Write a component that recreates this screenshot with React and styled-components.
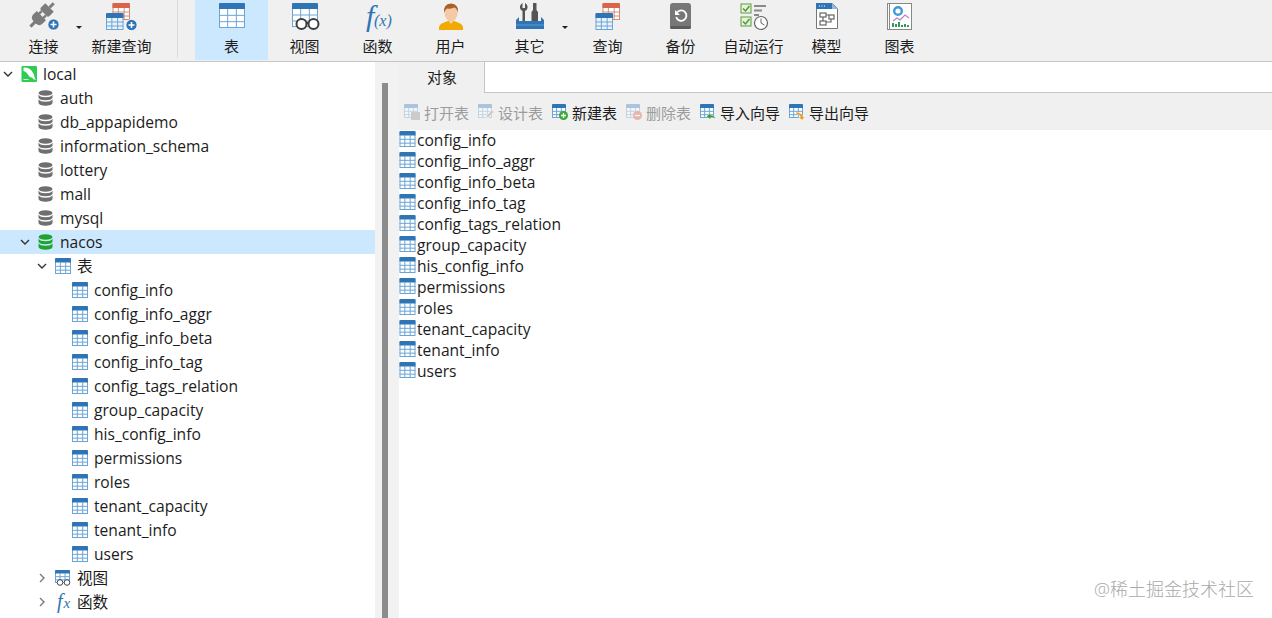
import React from "react";
import styled, { createGlobalStyle } from "styled-components";

const Global = createGlobalStyle`
  html, body { margin: 0; padding: 0; background: #fff; }
  body { font-family: "Open Sans", "Noto Sans CJK SC", sans-serif; font-size: 15px; color: #1c1c1c; }
  svg { overflow: visible; }
`;

const Page = styled.div`
  position: relative;
  width: 1272px;
  height: 618px;
  overflow: hidden;
  display: flex;
  flex-direction: column;
`;
const TopBar = styled.header`
  height: 61px;
  flex: none;
  display: flex;
  padding-left: 7px;
  background: #f0f0f0;
  border-bottom: 1px solid #c6c6c6;
`;
const TopButton = styled.div`
  width: 73px;
  height: 60px;
  flex: none;
  margin-left: ${(p) => p.$offset || 0}px;
  display: flex;
  flex-direction: column;
  align-items: center;
  padding-top: 2px;
  box-sizing: border-box;
  background: ${(p) => (p.$active ? "#cce8ff" : "transparent")};
`;
const TopLabel = styled.span`
  margin-top: 1px;
  line-height: 22px;
  font-size: 15px;
  white-space: nowrap;
`;
const Caret = styled.span`
  width: ${(p) => p.$w}px;
  flex: none;
  position: relative;
  &::after {
    content: "";
    position: absolute;
    left: -4px;
    top: 26px;
    border-left: 3px solid transparent;
    border-right: 3px solid transparent;
    border-top: 3px solid #222;
  }
`;
const Separator = styled.span`
  width: 1px;
  height: 58px;
  flex: none;
  margin: 0 17px 0 19px;
  background: #dcdcdc;
`;
const Main = styled.div`
  flex: 1;
  display: flex;
  min-height: 0;
`;
const Tree = styled.nav`
  width: 375px;
  flex: none;
  background: #fff;
`;
const Row = styled.div`
  height: 24px;
  display: flex;
  align-items: center;
  padding-left: ${(p) => p.$depth * 17}px;
  background: ${(p) => (p.$selected ? "#cce8ff" : "transparent")};
`;
const ChevronSlot = styled.span`
  width: 16px;
  height: 16px;
  flex: none;
  margin-right: 5px;
  display: flex;
  align-items: center;
  justify-content: center;
`;
const RowText = styled.span`
  margin-left: 6px;
  font-size: 15.6px;
  line-height: 24px;
  white-space: nowrap;
`;
const Gutter = styled.div`
  width: 24px;
  flex: none;
  box-sizing: border-box;
  padding: 21px 11px 0 7px;
  background: #f2f2f2;
  display: flex;
`;
const GutterBar = styled.div`
  width: 6px;
  background: #8c8c8c;
`;
const Content = styled.section`
  flex: 1;
  min-width: 0;
  display: flex;
  flex-direction: column;
`;
const TabStrip = styled.div`
  height: 31px;
  flex: none;
  display: flex;
`;
const Tab = styled.div`
  width: 86px;
  box-sizing: border-box;
  padding-left: 28px;
  line-height: 31px;
  font-size: 15px;
  background: #f0f0f0;
  border-right: 1px solid #c6c6c6;
`;
const TabFill = styled.div`
  flex: 1;
  background: #fff;
  border-bottom: 1px solid #c6c6c6;
`;
const ActionBar = styled.div`
  height: 37px;
  flex: none;
  box-sizing: border-box;
  padding: 1px 0 0 5px;
  display: flex;
  align-items: center;
  gap: 9px;
  background: #f0f0f0;
`;
const Action = styled.div`
  display: flex;
  align-items: center;
  gap: 4px;
  font-size: 15px;
  white-space: nowrap;
  color: ${(p) => (p.$disabled ? "#9c9c9c" : "#1c1c1c")};
`;
const ActionIcon = styled.span`
  display: flex;
  opacity: ${(p) => (p.$disabled ? 0.35 : 1)};
`;
const ObjectList = styled.div`
  flex: 1;
  display: flex;
  flex-direction: column;
  background: #fff;
`;
const ObjectRow = styled.div`
  height: 21px;
  display: flex;
  align-items: flex-start;
  gap: 1px;
  font-size: 15.6px;
  line-height: 20px;
  white-space: nowrap;
`;
const ObjectIcon = styled.svg`
  display: block;
  flex: none;
`;
const Watermark = styled.div`
  position: absolute;
  right: 18px;
  bottom: 17px;
  font-size: 18px;
  line-height: 24px;
  color: #a9a9a9;
  font-weight: 300;
  white-space: nowrap;
`;

const BLUE = "#2f75b5";
const LINE = "#6aa5d6";

/* Grid table drawn at any box inside an svg */
const TableArt = ({ x, y, w, h, color = BLUE, line = LINE, fill = "#fff", head = 4 }) => {
  const cols = [1, 2].map((i) => x + (w * i) / 3);
  const bodyH = h - head;
  const rows = [1, 2].map((i) => y + head + (bodyH * i) / 3);
  return (
    <g>
      <rect x={x + 0.5} y={y + 0.5} width={w - 1} height={h - 1} fill={fill} stroke={line} />
      {cols.map((c) => <line key={c} x1={c} x2={c} y1={y + head} y2={y + h} stroke={line} />)}
      {rows.map((r) => <line key={r} x1={x} x2={x + w} y1={r} y2={r} stroke={line} />)}
      <path d={`M${x} ${y + head}v-${head - 1.5}q0-1.5 1.5-1.5h${w - 3}q1.5 0 1.5 1.5v${head - 1.5}z`} fill={color} />
    </g>
  );
};
const Plus = ({ cx, cy }) => (
  <g>
    <circle cx={cx} cy={cy} r="5.6" fill="#2f75b5" stroke="#fff" strokeWidth="0.8" />
    <path d={`M${cx - 3} ${cy}h6M${cx} ${cy - 3}v6`} stroke="#fff" strokeWidth="1.6" />
  </g>
);
const Big = ({ children }) => <svg width="32" height="32" viewBox="0 0 32 32">{children}</svg>;

const topIcons = {
  plug: (
    <Big>
      <g transform="rotate(45 13 14)" fill="#7c7c7c">
        <rect x="11.500" y="-4" width="3" height="6" />
        <path d="M7 2h12v6q0 2-2 2H9q-2 0-2-2z" />
        <rect x="8.800" y="10" width="2.400" height="4" />
        <rect x="14.800" y="10" width="2.400" height="4" />
        <path d="M6.500 13.500h13v5q0 4-4.500 4.500h-4q-4.500-.5-4.500-4.500z" />
        <rect x="11.500" y="22" width="3" height="7" />
      </g>
      <Plus cx={25.5} cy={22.5} />
    </Big>
  ),
  newQuery: (
    <Big>
      <TableArt x={6.5} y={1} w={17.5} h={17} color="#d9644a" line="#d98a76" head={5} />
      <TableArt x={0} y={11} w={17.5} h={17} fill="#eaf3fb" head={5} />
      <Plus cx={25.5} cy={23} />
    </Big>
  ),
  table: (
    <Big><TableArt x={3} y={1} w={26} h={25} head={6} /></Big>
  ),
  view: (
    <Big>
      <TableArt x={3} y={1} w={26} h={24} head={6} />
      <circle cx="12.5" cy="22" r="5" fill="#fff" stroke="#3c3c3c" strokeWidth="2" />
      <circle cx="24.5" cy="22" r="5" fill="#fff" stroke="#3c3c3c" strokeWidth="2" />
      <path d="M17 21h3" stroke="#3c3c3c" strokeWidth="2" />
    </Big>
  ),
  fx: (
    <Big>
      <text x="4" y="24" fontFamily="Liberation Serif" fontStyle="italic" fontSize="30" fill={BLUE}>f</text>
      <text x="12" y="24" fontFamily="Liberation Serif" fontStyle="italic" fontSize="16" fill={BLUE}>(x)</text>
    </Big>
  ),
  user: (
    <Big>
      <path d="M4 28v-2q0-4 5-5.500l4-1.500h6l4 1.500q5 1.500 5 5.500v2z" fill="#f2a900" />
      <path d="M13 18h6l-3 4z" fill="#f8d9bd" />
      <ellipse cx="16" cy="11" rx="6.500" ry="8.500" fill="#f6c9a6" />
      <path d="M9 11q-1-9 7-9.500q8 .5 7 9.500q-1-5-4-5.500q-4 2-7 1q-2 1-3 4.500z" fill="#a9602d" />
    </Big>
  ),
  other: (
    <Big>
      <path d="M9 1v5l2.500 0V1q3 2 2.500 5q-.5 2.500-2.500 3v11h-2.500V9q-2-.5-2.500-3q-.5-3 2.500-5z" fill="#555" transform="translate(-.5 0)" />
      <path d="M19 1h3.500v7l1.500 2v11h-6.500V10L19 8z" fill="#555" />
      <path d="M2 18l3-3v4h22v-4l3 3v9H2z" fill={BLUE} />
      <rect x="2" y="20" width="28" height="7" fill={BLUE} />
      <path d="M2 23h28" stroke="#7fb2dd" strokeWidth="0.6" />
    </Big>
  ),
  query: (
    <Big>
      <TableArt x={10.5} y={1} w={17.5} h={17} color="#d9644a" line="#d98a76" head={5} />
      <TableArt x={3.5} y={11} w={17.5} h={17} fill="#eaf3fb" head={5} />
    </Big>
  ),
  backup: (
    <Big>
      <rect x="5" y="1" width="21" height="26" rx="3" fill="#777" />
      <rect x="5" y="24" width="21" height="3" rx="1.5" fill="#5c5c5c" />
      <path d="M12 10.500a5.200 5.200 0 1 1-.8 4.500" fill="none" stroke="#fff" strokeWidth="1.8" />
      <path d="M10 8v5h5z" fill="#fff" />
    </Big>
  ),
  auto: (
    <Big>
      <rect x="3" y="2" width="10" height="9" fill="#e6f3dc" stroke="#5d9c3c" />
      <path d="M5 6.500l2.500 2.500l4-5" fill="none" stroke="#4e9a2e" strokeWidth="1.5" />
      <rect x="3" y="15" width="10" height="9" fill="#e6f3dc" stroke="#5d9c3c" />
      <path d="M5 19.500l2.500 2.500l4-5" fill="none" stroke="#4e9a2e" strokeWidth="1.5" />
      <path d="M16 4h12M16 8.500h8M16 13h5" stroke="#8a8a8a" strokeWidth="1.8" />
      <circle cx="23" cy="21" r="6.500" fill="#fff" stroke="#666" strokeWidth="1.2" />
      <path d="M23 16.500V21l3.500 2" fill="none" stroke="#666" />
    </Big>
  ),
  model: (
    <Big>
      <path d="M5.500 1.500h16l5 5v20h-21z" fill="#fff" stroke="#777" />
      <path d="M5 1h16v6h6v0H5z" fill={BLUE} />
      <path d="M21 1l6 6h-6z" fill="#8fbce3" />
      <path d="M8 4h1M10.500 4h1M13 4h1" stroke="#fff" />
      <g fill="none" stroke="#666" strokeWidth="1.2">
        <rect x="9" y="11" width="6" height="4" />
        <rect x="18" y="13" width="5" height="4" />
        <rect x="9" y="19" width="6" height="4" />
        <path d="M15 13h3M12 15v4M20 17v3h-5" />
      </g>
    </Big>
  ),
  chart: (
    <Big>
      <rect x="3.5" y="1.500" width="2" height="26" fill="#fff" stroke="#888" />
      <rect x="5.5" y="1.500" width="22" height="26" fill="#fff" stroke="#888" />
      <circle cx="14" cy="9" r="3.8" fill="none" stroke="#3d9ad6" strokeWidth="2.4" />
      <path d="M9 19l4-3l3 2l5-5l4 3" fill="none" stroke="#b583c9" strokeWidth="1.2" />
      <path d="M9 25v-4M12 25v-3M15 25v-5M18 25v-2M21 25v-3M24 25v-2" stroke="#2e9a54" strokeWidth="2" />
    </Big>
  ),
};

const Small = ({ children, w = 16, h = 16 }) => <svg width={w} height={h} viewBox="0 0 16 16">{children}</svg>;
const TableIcon = () => <Small><TableArt x={0} y={0} w={16} h={16} head={4.5} /></Small>;
const ListIcon = () => (
  <ObjectIcon width="17" height="18" viewBox="0 0 17 18"><TableArt x={0.5} y={1} w={16} h={16} head={4.5} /></ObjectIcon>
);
const DbIcon = ({ color = "#6f6f6f" }) => (
  <Small>
    <g fill={color}>
      <ellipse cx="7.500" cy="3" rx="7" ry="2.800" />
      <path d="M.5 4.700q1.500 2.500 7 2.500t7-2.500v3q-1 2.500-7 2.500t-7-2.500z" />
      <path d="M.5 9.200q1.500 2.500 7 2.500t7-2.500v3.800q-1 2.700-7 2.700t-7-2.700z" />
    </g>
  </Small>
);
const LocalIcon = () => (
  <Small>
    <rect x="0.5" y="0" width="15.5" height="16" rx="1" fill="#2ecc52" />
    <path d="M2.500 1.500q5-.5 8 3q2.500 3 3 6.500l1.200 3q-2.500-.5-3.500-2.300q-3.200-.5-4.700-3.700Q5 5.500 2.500 5z" fill="#fff" />
    <path d="M2.500 13.500h5" stroke="#fff" strokeWidth="0.8" />
  </Small>
);
const ViewIcon = () => (
  <Small>
    <TableArt x={0} y={0} w={15} h={13} head={3.5} />
    <circle cx="5" cy="12.500" r="2.8" fill="#fff" stroke="#444" />
    <circle cx="12" cy="12.500" r="2.8" fill="#fff" stroke="#444" />
  </Small>
);
const FxIcon = () => (
  <Small>
    <text x="2" y="14" fontFamily="Liberation Serif" fontStyle="italic" fontSize="20" fill={BLUE}>f</text>
    <text x="8.5" y="14" fontFamily="Liberation Serif" fontStyle="italic" fontSize="15" fill={BLUE}>x</text>
  </Small>
);
const Chevron = ({ open, muted }) => (
  <svg width="10" height="10" viewBox="0 0 10 10" fill="none" stroke={muted ? "#7a7a7a" : "#333"} strokeWidth="1.4">
    <path d={open ? "M1 3l4 4l4-4" : "M3 1l4 4l-4 4"} />
  </svg>
);

const actionIcon = (badge) => (
  <Small>
    <TableArt x={0} y={0} w={14} h={14} head={4} />
    {badge === "open" && <path d="M7 8h9v8H7z" fill="#888" />}
    {badge === "design" && <path d="M8 14l1-3l5-5l2 2l-5 5z" fill="#888" stroke="#fff" strokeWidth="0.6" />}
    {badge === "new" && (
      <g>
        <circle cx="11.500" cy="11.500" r="4.500" fill="#3da83d" />
        <path d="M9 11.500h5M11.500 9v5" stroke="#fff" strokeWidth="1.3" />
      </g>
    )}
    {badge === "del" && (
      <g>
        <circle cx="11.500" cy="11.500" r="4.500" fill="#d84a3a" />
        <path d="M9 11.500h5" stroke="#fff" strokeWidth="1.3" />
      </g>
    )}
    {badge === "import" && (
      <path d="M15.500 14.500q-1-3.500-5-3.500v-2l-4 3.500l4 3v-2q3 0 5 1z" fill="#3a9a3a" stroke="#fff" strokeWidth="0.4" />
    )}
    {badge === "export" && (
      <path d="M7 10q4 .5 4.500 3h-2l3.500 3l3-3h-2q-.5-4-7-5z" fill="#ee9a1c" stroke="#fff" strokeWidth="0.4" />
    )}
  </Small>
);

const tableNames = [
  "config_info", "config_info_aggr", "config_info_beta", "config_info_tag", "config_tags_relation",
  "group_capacity", "his_config_info", "permissions", "roles", "tenant_capacity", "tenant_info", "users",
];
const databases = ["auth", "db_appapidemo", "information_schema", "lottery", "mall", "mysql"];
const actions = [
  { label: "打开表", badge: "open", disabled: true },
  { label: "设计表", badge: "design", disabled: true },
  { label: "新建表", badge: "new" },
  { label: "删除表", badge: "del", disabled: true },
  { label: "导入向导", badge: "import" },
  { label: "导出向导", badge: "export" },
];

const TreeRow = ({ depth, chevron, muted, icon, selected, children }) => (
  <Row $depth={depth} $selected={selected}>
    <ChevronSlot>{chevron && <Chevron open={chevron === "open"} muted={muted} />}</ChevronSlot>
    {icon}
    <RowText>{children}</RowText>
  </Row>
);

export default function App() {
  return (
    <Page>
      <Global />
      <TopBar>
        <TopButton>{topIcons.plug}<TopLabel>连接</TopLabel></TopButton>
        <Caret $w={5} />
        <TopButton>{topIcons.newQuery}<TopLabel>新建查询</TopLabel></TopButton>
        <Separator />
        <TopButton $active>{topIcons.table}<TopLabel>表</TopLabel></TopButton>
        <TopButton>{topIcons.view}<TopLabel>视图</TopLabel></TopButton>
        <TopButton>{topIcons.fx}<TopLabel>函数</TopLabel></TopButton>
        <TopButton>{topIcons.user}<TopLabel>用户</TopLabel></TopButton>
        <TopButton $offset={6}>{topIcons.other}<TopLabel>其它</TopLabel></TopButton>
        <Caret $w={5} />
        <TopButton>{topIcons.query}<TopLabel>查询</TopLabel></TopButton>
        <TopButton>{topIcons.backup}<TopLabel>备份</TopLabel></TopButton>
        <TopButton>{topIcons.auto}<TopLabel>自动运行</TopLabel></TopButton>
        <TopButton>{topIcons.model}<TopLabel>模型</TopLabel></TopButton>
        <TopButton>{topIcons.chart}<TopLabel>图表</TopLabel></TopButton>
      </TopBar>
      <Main>
        <Tree>
          <TreeRow depth={0} chevron="open" icon={<LocalIcon />}>local</TreeRow>
          {databases.map((d) => (
            <TreeRow key={d} depth={1} icon={<DbIcon />}>{d}</TreeRow>
          ))}
          <TreeRow depth={1} chevron="open" selected icon={<DbIcon color="#1fa32d" />}>nacos</TreeRow>
          <TreeRow depth={2} chevron="open" icon={<TableIcon />}>表</TreeRow>
          {tableNames.map((t) => (
            <TreeRow key={t} depth={3} icon={<TableIcon />}>{t}</TreeRow>
          ))}
          <TreeRow depth={2} chevron="closed" muted icon={<ViewIcon />}>视图</TreeRow>
          <TreeRow depth={2} chevron="closed" muted icon={<FxIcon />}>函数</TreeRow>
        </Tree>
        <Gutter><GutterBar /></Gutter>
        <Content>
          <TabStrip>
            <Tab>对象</Tab>
            <TabFill />
          </TabStrip>
          <ActionBar>
            {actions.map((a) => (
              <Action key={a.label} $disabled={a.disabled}>
                <ActionIcon $disabled={a.disabled}>{actionIcon(a.badge)}</ActionIcon>
                {a.label}
              </Action>
            ))}
          </ActionBar>
          <ObjectList>
            {tableNames.map((t) => (
              <ObjectRow key={t}><ListIcon />{t}</ObjectRow>
            ))}
          </ObjectList>
        </Content>
      </Main>
      <Watermark>@稀土掘金技术社区</Watermark>
    </Page>
  );
}
